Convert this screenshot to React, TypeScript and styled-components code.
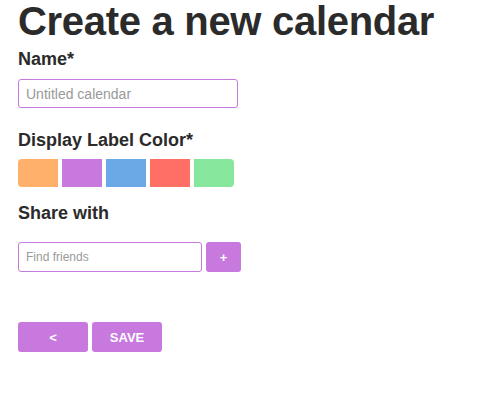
import React from "react";
import styled, { createGlobalStyle } from "styled-components";

const Global = createGlobalStyle`
  html, body { margin: 0; padding: 0; background: #fff; }
  body { font-family: "Liberation Sans", Arial, Helvetica, sans-serif; color: #2b2b2b; }
  * { box-sizing: border-box; }
`;

const PURPLE = "#c879de";

const Page = styled.div`
  display: flex;
  flex-direction: column;
  align-items: flex-start;
  padding: 1px 18px 0;
`;

const Title = styled.h1`
  margin: 0;
  font-size: 40px;
  line-height: 40px;
  font-weight: bold;
  letter-spacing: -0.3px;
`;

const Label = styled.h3<{ $top: number }>`
  margin: ${(p) => p.$top}px 0 0;
  font-size: 18px;
  line-height: 20px;
  font-weight: bold;
`;

const TextInput = styled.input<{ $w: number; $h: number; $top: number; $fs: number }>`
  margin-top: ${(p) => p.$top}px;
  width: ${(p) => p.$w}px;
  height: ${(p) => p.$h}px;
  border: 1px solid ${PURPLE};
  border-radius: 3px;
  padding: 0 7px;
  font-family: "Liberation Sans", Arial, sans-serif;
  font-size: ${(p) => p.$fs}px;
  color: #333;
  outline: none;
  &::placeholder { color: #999; }
`;

const Swatches = styled.div`
  margin-top: 9px;
  display: flex;
  gap: 4px;
`;

const Swatch = styled.div<{ $c: string }>`
  width: 40px;
  height: 28px;
  background: ${(p) => p.$c};
  &:first-child { border-radius: 4px 0 0 4px; }
  &:last-child { border-radius: 0 4px 4px 0; }
`;

const Row = styled.div<{ $top: number }>`
  margin-top: ${(p) => p.$top}px;
  display: flex;
  gap: 4px;
`;

const Button = styled.button<{ $w: number }>`
  width: ${(p) => p.$w}px;
  height: 30px;
  border: none;
  border-radius: 3px;
  background: ${PURPLE};
  color: #fff;
  font-family: "Liberation Sans", Arial, sans-serif;
  font-weight: bold;
  font-size: 13px;
  padding: 0;
  display: flex;
  align-items: center;
  justify-content: center;
  cursor: pointer;
`;

const colors = ["#ffb06a", "#c879de", "#6aa9e5", "#ff6f65", "#87e89d"];

export default function App() {
  return (
    <>
      <Global />
      <Page>
        <Title>Create a new calendar</Title>
        <Label $top={8}>Name*</Label>
        <TextInput $top={10} $w={220} $h={29} $fs={14} placeholder="Untitled calendar" />
        <Label $top={22}>Display Label Color*</Label>
        <Swatches>
          {colors.map((c) => (
            <Swatch key={c} $c={c} />
          ))}
        </Swatches>
        <Label $top={16}>Share with</Label>
        <Row $top={19}>
          <TextInput $top={0} $w={184} $h={30} $fs={12} placeholder="Find friends" />
          <Button $w={35}>+</Button>
        </Row>
        <Row $top={50}>
          <Button $w={70}>&lt;</Button>
          <Button $w={70}>SAVE</Button>
        </Row>
      </Page>
    </>
  );
}
